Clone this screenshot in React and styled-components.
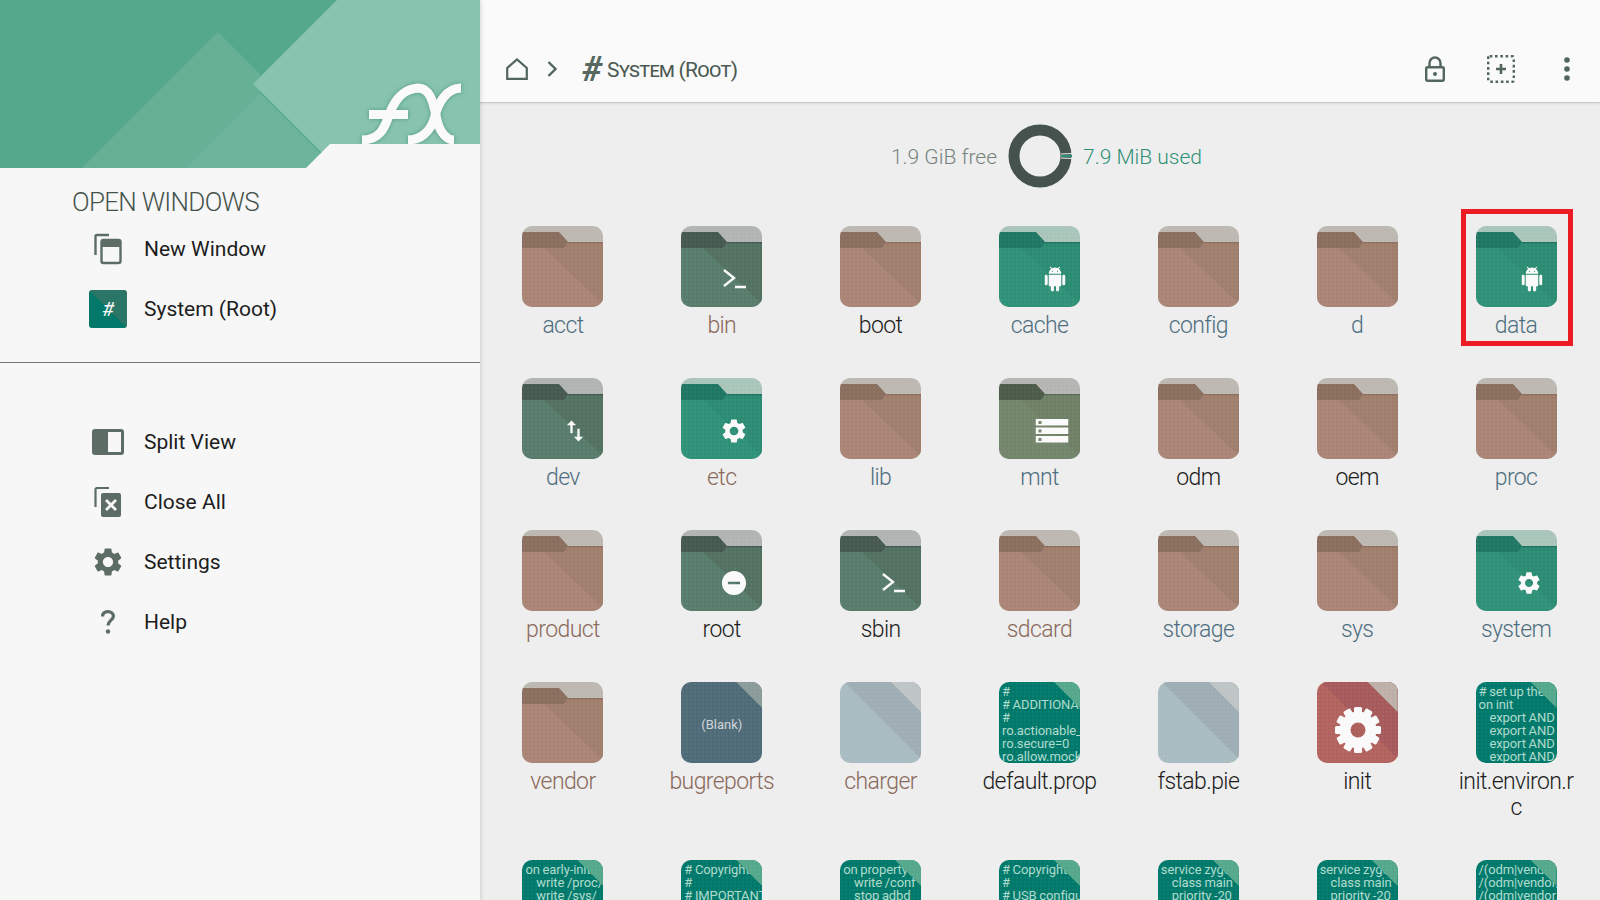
import React from "react"
import styled, { createGlobalStyle } from "styled-components"
import { MdSettings, MdRemoveCircle, MdSwapVert } from "react-icons/md"

const GlobalStyle = createGlobalStyle`
  html, body {
    margin: 0;
    padding: 0;
    background: #eeeeee;
    font-family: Roboto, "Liberation Sans", sans-serif;
  }
  *, *::before, *::after { box-sizing: border-box; }
`

const Page = styled.div`
  display: flex;
  width: 1600px;
  height: 900px;
  overflow: hidden;
`

const Sidebar = styled.aside`
  position: relative;
  z-index: 2;
  flex: 0 0 480px;
  background: #f7f7f7;
  box-shadow: 1px 0 4px rgba(0, 0, 0, 0.14);
`

const Banner = styled.svg`
  display: block;
  width: 480px;
  height: 168px;
`

const SectionTitle = styled.h2`
  margin: 0;
  padding: 19px 0 0 72px;
  font-size: 26px;
  line-height: 30px;
  font-weight: 300;
  color: #46534d;
  letter-spacing: -0.7px;
`

const MenuList = styled.nav`
  display: flex;
  flex-direction: column;
  margin-top: ${p => p.$top}px;
`

const MenuRow = styled.div`
  display: flex;
  align-items: center;
  height: 60px;
  padding-left: 88px;
  gap: 16px;
  font-size: 21px;
  color: #1d1d1d;
`

const MenuIcon = styled.span`
  display: flex;
  align-items: center;
  justify-content: center;
  width: 40px;
  height: 40px;
  color: #5d6d66;
`

const RootTile = styled.span`
  display: flex;
  align-items: center;
  justify-content: center;
  width: 38px;
  height: 38px;
  border-radius: 3px;
  background: linear-gradient(to top right, #00796b 50%, #2a7565 50%);
  color: #fafafa;
  font-size: 20px;
  font-style: italic;
`

const Divider = styled.hr`
  margin: 23px 0 0;
  border: 0;
  border-top: 1px solid #777;
`

const Main = styled.main`
  flex: 1;
  min-width: 0;
`

const TopBar = styled.header`
  display: flex;
  align-items: center;
  height: 103px;
  padding: 36px 0 0 26px;
  background: #fafafa;
  border-bottom: 1px solid #c9c9c9;
  box-shadow: 0 1px 2px rgba(0, 0, 0, 0.08);
`

const Chevron = styled.svg`
  margin-left: 19px;
`

const Hash = styled.span`
  margin-left: 25px;
  font-size: 35px;
  line-height: 1;
  font-weight: 700;
  font-style: italic;
  color: #56685f;
`

const Crumb = styled.span`
  margin-left: 5px;
  padding-top: 2px;
  font-size: 21px;
  font-variant: small-caps;
  color: #4b5952;
  letter-spacing: -0.7px;
`

const Actions = styled.div`
  display: flex;
  margin-left: auto;
`

const ActionButton = styled.span`
  display: flex;
  align-items: center;
  justify-content: center;
  width: 66px;
`

const Usage = styled.section`
  display: grid;
  grid-template-columns: 1fr auto 1fr;
  align-items: center;
  column-gap: 11px;
  padding-top: 21px;
  font-size: 21px;
  font-weight: 300;
`

const Free = styled.span`
  padding-top: 2px;
  text-align: right;
  color: #76837d;
`

const Used = styled.span`
  padding-top: 2px;
  color: #2e9077;
`

const FileGrid = styled.section`
  display: grid;
  grid-template-columns: repeat(7, 1fr);
  row-gap: 39px;
  padding: 38px 4.5px 0 3.5px;
`

const Cell = styled.div`
  position: relative;
  display: flex;
  flex-direction: column;
  align-items: center;

  ${p => p.$marked && `
    &::after {
      content: "";
      position: absolute;
      top: -17px;
      left: 24px;
      width: 112px;
      height: 137px;
      border: 5px solid #ed1c24;
    }
  `}
`

const Thumb = styled.div`
  position: relative;
  width: 81px;
  height: 81px;
  border-radius: 10px;
  overflow: hidden;
  background: ${p => p.$bg || "transparent"};

  svg { display: block; }

  &::after {
    content: "";
    position: absolute;
    inset: 0;
    background-image: radial-gradient(rgba(255, 255, 255, 0.08) 0.6px, transparent 0.9px);
    background-size: 4px 4px;
  }
`

const Badge = styled.span`
  position: absolute;
  left: ${p => p.$x}px;
  top: 53px;
  display: flex;
  transform: translate(-50%, -50%);
  color: #fafafa;
`

const Fold = styled.span`
  position: absolute;
  top: 0;
  right: 0;
  width: ${p => p.$size}px;
  height: ${p => p.$size}px;
  background: ${p => p.$color};
  clip-path: polygon(0 0, 100% 0, 100% 100%);
`

const Preview = styled.pre`
  margin: 0;
  padding: 3px 0 0 3px;
  font-family: Roboto, "Liberation Sans", sans-serif;
  font-size: 13px;
  line-height: 13px;
  letter-spacing: -0.1px;
  word-spacing: -0.4px;
  color: #b0dbcc;
`

const BlankText = styled.span`
  position: absolute;
  left: 0;
  right: 0;
  top: 35px;
  text-align: center;
  font-size: 13px;
  line-height: 16px;
  color: #cfd6d8;
`

const Label = styled.div`
  width: 120px;
  margin-top: 6px;
  text-align: center;
  font-size: 23px;
  line-height: 26px;
  font-weight: 300;
  letter-spacing: -0.6px;
  word-break: break-all;
  color: ${p => p.$color};
`

const BLUE = "#4f6f80"
const BROWN = "#8a6a5c"
const BLACK = "#1c1c1c"

const FOLDERS = {
  brown: { top: "#bdb8b1", tab: "#8a6e5e", line: "#8f6f60", body: "#aa8576", shade: "#a07e6d" },
  slate: { top: "#b0b5b3", tab: "#46594f", line: "#46594f", body: "#587c6b", shade: "#537160" },
  teal: { top: "#a9c5ba", tab: "#1f7763", line: "#1f7763", body: "#2f9178", shade: "#2b8b73" },
  olive: { top: "#b5b6b3", tab: "#4c5b4a", line: "#5c6c55", body: "#73856b", shade: "#6f8067" },
}

const TerminalGlyph = () => (
  <svg width="24" height="22" viewBox="0 0 24 22" fill="none" stroke="#fafafa" strokeWidth="2.4">
    <polyline points="2,2 12,10 2,18" />
    <line x1="13" y1="19" x2="24" y2="19" />
  </svg>
)

const ListGlyph = () => (
  <svg width="33" height="24" viewBox="0 0 33 24">
    {[0, 8.5, 17].map(y => (
      <g key={y}>
        <rect x="0" y={y} width="33" height="6.5" fill="#fafafa" />
        <rect x="3" y={y + 2} width="3" height="3" fill="#73856b" />
      </g>
    ))}
  </svg>
)

const AndroidGlyph = () => (
  <svg width="21" height="25" viewBox="2 0 20 24" fill="#fafafa">
    <path d="M6 18c0 .55.45 1 1 1h1v3.5c0 .83.67 1.5 1.5 1.5s1.5-.67 1.5-1.5V19h2v3.5c0 .83.67 1.5 1.5 1.5s1.5-.67 1.5-1.5V19h1c.55 0 1-.45 1-1V8H6v10zM3.5 8C2.67 8 2 8.67 2 9.5v7c0 .83.67 1.5 1.5 1.5S5 17.33 5 16.5v-7C5 8.67 4.33 8 3.5 8zm17 0c-.83 0-1.5.67-1.5 1.5v7c0 .83.67 1.5 1.5 1.5s1.5-.67 1.5-1.5v-7c0-.83-.67-1.5-1.5-1.5zm-4.97-5.84l1.3-1.3c.2-.2.2-.51 0-.71-.2-.2-.51-.2-.71 0l-1.48 1.48C13.85 1.23 12.95 1 12 1c-.96 0-1.86.23-2.66.63L7.85.15c-.2-.2-.51-.2-.71 0-.2.2-.2.51 0 .71l1.31 1.31C6.97 3.26 6 5.01 6 7h12c0-1.99-.97-3.75-2.47-4.84zM10 5H9V4h1v1zm5 0h-1V4h1v1z" />
  </svg>
)

const GLYPHS = {
  terminal: { icon: <TerminalGlyph />, x: 53 },
  android: { icon: <AndroidGlyph />, x: 56 },
  gear: { icon: <MdSettings size={29} />, x: 53 },
  small: { icon: <MdSettings size={27} />, x: 53 },
  swap: { icon: <MdSwapVert size={28} />, x: 53 },
  minus: { icon: <MdRemoveCircle size={29} />, x: 53 },
  list: { icon: <ListGlyph />, x: 53 },
}

const Folder = ({ kind, glyph }) => {
  const c = FOLDERS[kind]
  return (
    <Thumb>
      <svg width="81" height="81" viewBox="0 0 81 81">
        <rect width="81" height="81" fill={c.top} />
        <rect y="16" width="81" height="65" fill={c.body} />
        <polygon points="42,22 46,16 81,16 81,78 22,22" fill={c.shade} />
        <rect x="46" y="16" width="35" height="1.5" fill={c.line} />
        <polygon points="0,6 37,6 46,16 42,22 0,22" fill={c.tab} />
      </svg>
      {glyph && <Badge $x={GLYPHS[glyph].x}>{GLYPHS[glyph].icon}</Badge>}
    </Thumb>
  )
}

const TextThumb = ({ lines }) => (
  <Thumb $bg="#00796b">
    <Preview>{lines.join("\n")}</Preview>
    <Fold $size={26} $color="#55a88c" />
  </Thumb>
)

const BlankThumb = () => (
  <Thumb $bg="#4f6b78">
    <BlankText>(Blank)</BlankText>
    <Fold $size={26} $color="#8a9b99" />
  </Thumb>
)

const ImageThumb = () => (
  <Thumb $bg="#a9bcc1">
    <svg width="81" height="81" viewBox="0 0 81 81">
      <polygon points="4,0 81,0 81,77" fill="#9fadb5" />
    </svg>
    <Fold $size={30} $color="#bfc4c4" />
  </Thumb>
)

const InitThumb = () => (
  <Thumb $bg="#b3635f">
    <svg width="81" height="81" viewBox="0 0 81 81">
      <polygon points="4,0 81,0 81,77" fill="#a65a5b" />
      <g fill="#fafafa">
        {Array.from({ length: 12 }, (_, i) => (
          <rect key={i} x="37" y="25" width="8" height="8" rx="1.5" transform={`rotate(${i * 30} 41 48)`} />
        ))}
        <circle cx="41" cy="48" r="18.5" />
      </g>
      <circle cx="41" cy="48" r="7.5" fill="#ad5f5c" />
    </svg>
    <Fold $size={30} $color="#bdb0a8" />
  </Thumb>
)

const FILES = [
  { name: "acct", color: BLUE, folder: "brown" },
  { name: "bin", color: BROWN, folder: "slate", glyph: "terminal" },
  { name: "boot", color: BLACK, folder: "brown" },
  { name: "cache", color: BLUE, folder: "teal", glyph: "android" },
  { name: "config", color: BLUE, folder: "brown" },
  { name: "d", color: BLUE, folder: "brown" },
  { name: "data", color: BLUE, folder: "teal", glyph: "android", marked: true },
  { name: "dev", color: BLUE, folder: "slate", glyph: "swap" },
  { name: "etc", color: BROWN, folder: "teal", glyph: "gear" },
  { name: "lib", color: BLUE, folder: "brown" },
  { name: "mnt", color: BLUE, folder: "olive", glyph: "list" },
  { name: "odm", color: BLACK, folder: "brown" },
  { name: "oem", color: BLACK, folder: "brown" },
  { name: "proc", color: BLUE, folder: "brown" },
  { name: "product", color: BROWN, folder: "brown" },
  { name: "root", color: BLACK, folder: "slate", glyph: "minus" },
  { name: "sbin", color: BLACK, folder: "slate", glyph: "terminal" },
  { name: "sdcard", color: BROWN, folder: "brown" },
  { name: "storage", color: BLUE, folder: "brown" },
  { name: "sys", color: BLUE, folder: "brown" },
  { name: "system", color: BLUE, folder: "teal", glyph: "small" },
  { name: "vendor", color: BROWN, folder: "brown" },
  { name: "bugreports", color: BROWN, thumb: "blank" },
  { name: "charger", color: BROWN, thumb: "image" },
  {
    name: "default.prop",
    color: BLACK,
    lines: ["#", "# ADDITIONAL", "#", "ro.actionable_", "ro.secure=0", "ro.allow.mock"],
  },
  { name: "fstab.pie", color: BLACK, thumb: "image" },
  { name: "init", color: BLACK, thumb: "init" },
  {
    name: "init.environ.rc",
    color: BLACK,
    lines: ["# set up the", "on init", "    export AND", "    export AND", "    export AND", "    export AND"],
  },
  { name: "init.rc", color: BLACK, lines: ["on early-init", "    write /proc/", "    write /sys/"] },
  { name: "init.usb.rc", color: BLACK, lines: ["# Copyright", "#", "# IMPORTANT"] },
  { name: "init.debug.rc", color: BLACK, lines: ["on property", "    write /conf", "    stop adbd"] },
  { name: "init.usb.configfs.rc", color: BLACK, lines: ["# Copyright", "#", "# USB configu"] },
  { name: "init.zygote32.rc", color: BLACK, lines: ["service zygote", "    class main", "    priority -20"] },
  { name: "init.zygote64.rc", color: BLACK, lines: ["service zygote", "    class main", "    priority -20"] },
  { name: "plat_file_contexts", color: BLACK, lines: ["/(odm|vendor", "/(odm|vendor/", "/(odm|vendor/"] },
]

const renderThumb = file => {
  if (file.folder) return <Folder kind={file.folder} glyph={file.glyph} />
  if (file.lines) return <TextThumb lines={file.lines} />
  if (file.thumb === "blank") return <BlankThumb />
  if (file.thumb === "init") return <InitThumb />
  return <ImageThumb />
}

const BannerArt = () => (
  <Banner viewBox="0 0 480 168">
    <defs>
      <filter id="logoGlow" x="-20%" y="-20%" width="140%" height="140%">
        <feDropShadow dx="0" dy="0" stdDeviation="2" floodColor="#3f8f78" floodOpacity="0.8" />
      </filter>
    </defs>
    <rect width="480" height="168" fill="#55a88c" />
    <polygon points="218,32 260,74 260,93 185,168 82,168" fill="#66b096" />
    <polygon points="260,93 335,168 185,168" fill="#6eb49c" />
    <polygon points="337,0 480,0 480,168 337,168 253,84" fill="#87c3ae" />
    <g filter="url(#logoGlow)" fill="none" stroke="#fafafa" strokeWidth="9">
      <path d="M362 140 C386 140 386 118 393 106 C399 95 406 89 418 88 C432 88 434 108 437 120 C440 133 447 140 454 140" />
      <path d="M461 88 C446 88 438 104 435 116 C431 132 420 140 408 140" />
      <rect x="369" y="110" width="39" height="9" fill="#fafafa" stroke="none" />
    </g>
    <polygon points="306,168 330,144 480,144 480,168" fill="#f7f7f7" />
  </Banner>
)

const NewWindowIcon = () => (
  <svg width="28" height="32" viewBox="0 0 28 32" fill="none">
    <path d="M15 2 H3 a1.5 1.5 0 0 0 -1.5 1.5 V22" stroke="currentColor" strokeWidth="2.4" />
    <rect x="7.5" y="7" width="19" height="23" rx="2" stroke="currentColor" strokeWidth="2.4" />
    <rect x="7.5" y="7" width="19" height="7" fill="currentColor" />
  </svg>
)

const SplitIcon = () => (
  <svg width="32" height="26" viewBox="0 0 32 26">
    <rect width="32" height="26" rx="3" fill="currentColor" />
    <rect x="16" y="3" width="13" height="20" fill="#f7f7f7" />
  </svg>
)

const CloseAllIcon = () => (
  <svg width="28" height="32" viewBox="0 0 28 32" fill="none">
    <path d="M15 2 H3 a1.5 1.5 0 0 0 -1.5 1.5 V21" stroke="currentColor" strokeWidth="2.2" />
    <rect x="7" y="7" width="20" height="24" rx="2" fill="currentColor" />
    <path d="M12 14 L22 24 M22 14 L12 24" stroke="#f7f7f7" strokeWidth="2.8" />
  </svg>
)

const HelpIcon = () => (
  <svg width="14" height="24" viewBox="0 0 14 24" fill="none" stroke="currentColor" strokeWidth="3.2">
    <path d="M1.6 6.5 C1.6 3.2 4 1.6 7 1.6 C10.2 1.6 12.4 3.4 12.4 6.2 C12.4 10 7 10.4 7 15.5" />
    <circle cx="7" cy="21.5" r="2.2" fill="currentColor" stroke="none" />
  </svg>
)

const HomeIcon = () => (
  <svg width="22" height="22" viewBox="0 0 22 22" fill="none">
    <path d="M1.2 20.8 V10 L11 1.5 L20.8 10 V20.8 Z" stroke="#52665c" strokeWidth="2.2" />
  </svg>
)

const LockIcon = () => (
  <svg width="20" height="26" viewBox="0 0 20 26" fill="none" stroke="#52665c" strokeWidth="2.4">
    <rect x="1.2" y="11.2" width="17.6" height="13.6" rx="1.5" />
    <path d="M4.5 11 V7 a5.5 5.5 0 0 1 11 0 V11" />
    <circle cx="10" cy="18" r="2" fill="#52665c" stroke="none" />
  </svg>
)

const AddSelectIcon = () => (
  <svg width="28" height="28" viewBox="0 0 28 28" fill="none" stroke="#52665c">
    <rect x="1.2" y="1.2" width="25.6" height="25.6" rx="1.5" strokeWidth="2.4" strokeDasharray="2.6 2.7" />
    <path d="M14 9 V19 M9 14 H19" strokeWidth="2.6" />
  </svg>
)

const MoreIcon = () => (
  <svg width="6" height="24" viewBox="0 0 6 24" fill="#52665c">
    <circle cx="3" cy="3" r="2.8" />
    <circle cx="3" cy="12" r="2.8" />
    <circle cx="3" cy="21" r="2.8" />
  </svg>
)

const UsageRing = () => (
  <svg width="64" height="64" viewBox="0 0 64 64" fill="none">
    <circle cx="32" cy="32" r="26" stroke="#46524d" strokeWidth="11" />
    <path d="M53 30 L64 29.5" stroke="#eeeeee" strokeWidth="1" />
    <path d="M53 32 L64 32" stroke="#2e9077" strokeWidth="2" />
    <path d="M53 34 L64 34.5" stroke="#eeeeee" strokeWidth="1" />
  </svg>
)

const App = () => (
  <Page>
    <GlobalStyle />
    <Sidebar>
      <BannerArt />
      <SectionTitle>OPEN WINDOWS</SectionTitle>
      <MenuList $top={2}>
        <MenuRow>
          <MenuIcon>
            <NewWindowIcon />
          </MenuIcon>
          New Window
        </MenuRow>
        <MenuRow>
          <MenuIcon>
            <RootTile>#</RootTile>
          </MenuIcon>
          System (Root)
        </MenuRow>
      </MenuList>
      <Divider />
      <MenuList $top={49}>
        <MenuRow>
          <MenuIcon>
            <SplitIcon />
          </MenuIcon>
          Split View
        </MenuRow>
        <MenuRow>
          <MenuIcon>
            <CloseAllIcon />
          </MenuIcon>
          Close All
        </MenuRow>
        <MenuRow>
          <MenuIcon>
            <MdSettings size={34} />
          </MenuIcon>
          Settings
        </MenuRow>
        <MenuRow>
          <MenuIcon>
            <HelpIcon />
          </MenuIcon>
          Help
        </MenuRow>
      </MenuList>
    </Sidebar>
    <Main>
      <TopBar>
        <HomeIcon />
        <Chevron width="10" height="16" viewBox="0 0 10 16" fill="none" stroke="#52665c" strokeWidth="2.4">
          <polyline points="1.5,1 8.5,8 1.5,15" />
        </Chevron>
        <Hash>#</Hash>
        <Crumb>System (Root)</Crumb>
        <Actions>
          <ActionButton>
            <LockIcon />
          </ActionButton>
          <ActionButton>
            <AddSelectIcon />
          </ActionButton>
          <ActionButton>
            <MoreIcon />
          </ActionButton>
        </Actions>
      </TopBar>
      <Usage>
        <Free>1.9 GiB free</Free>
        <UsageRing />
        <Used>7.9 MiB used</Used>
      </Usage>
      <FileGrid>
        {FILES.map(file => (
          <Cell key={file.name} $marked={file.marked}>
            {renderThumb(file)}
            <Label $color={file.color}>{file.name}</Label>
          </Cell>
        ))}
      </FileGrid>
    </Main>
  </Page>
)

export default App
